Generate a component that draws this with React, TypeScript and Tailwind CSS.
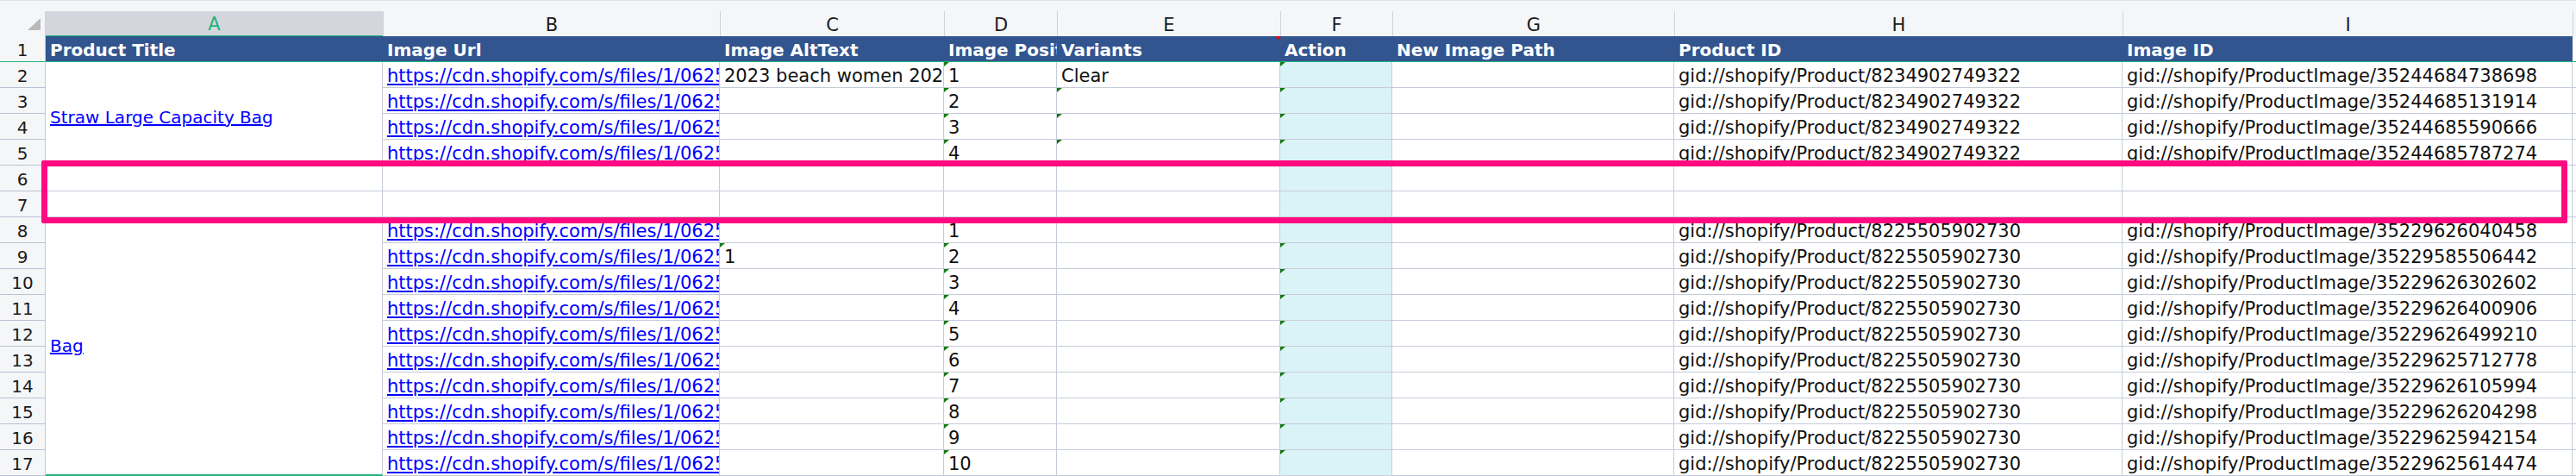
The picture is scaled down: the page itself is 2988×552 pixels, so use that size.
import React from 'react';

type Col = 'B' | 'C' | 'D' | 'E' | 'F' | 'G' | 'H' | 'I' | 'J';

interface RowData {
  n: number;
  cells: Partial<Record<Col, string>>;
  marks: Col[];
}

const URL = 'https://cdn.shopify.com/s/files/1/0625/8936/1047/files/';
const P1 = 'gid://shopify/Product/8234902749322';
const P2 = 'gid://shopify/Product/8225505902730';
const IMG = 'gid://shopify/ProductImage/';

const COLS: Col[] = ['B', 'C', 'D', 'E', 'F', 'G', 'H', 'I', 'J'];

const rows: RowData[] = [
  { n: 2, cells: { B: URL + 'beach-bag-1.jpg', C: '2023 beach women 2023 new straw bag', D: '1', E: 'Clear', H: P1, I: IMG + '35244684738698' }, marks: ['D', 'F'] },
  { n: 3, cells: { B: URL + 'beach-bag-2.jpg', D: '2', H: P1, I: IMG + '35244685131914' }, marks: ['D', 'E', 'F'] },
  { n: 4, cells: { B: URL + 'beach-bag-3.jpg', D: '3', H: P1, I: IMG + '35244685590666' }, marks: ['D', 'E', 'F'] },
  { n: 5, cells: { B: URL + 'beach-bag-4.jpg', D: '4', H: P1, I: IMG + '35244685787274' }, marks: ['D', 'E', 'F'] },
  { n: 6, cells: {}, marks: [] },
  { n: 7, cells: {}, marks: [] },
  { n: 8, cells: { B: URL + 'bag-1.jpg', D: '1', H: P2, I: IMG + '35229626040458' }, marks: ['D', 'F'] },
  { n: 9, cells: { B: URL + 'bag-2.jpg', C: '1', D: '2', H: P2, I: IMG + '35229585506442' }, marks: ['C', 'D', 'F'] },
  { n: 10, cells: { B: URL + 'bag-3.jpg', D: '3', H: P2, I: IMG + '35229626302602' }, marks: ['D', 'F'] },
  { n: 11, cells: { B: URL + 'bag-4.jpg', D: '4', H: P2, I: IMG + '35229626400906' }, marks: ['D', 'F'] },
  { n: 12, cells: { B: URL + 'bag-5.jpg', D: '5', H: P2, I: IMG + '35229626499210' }, marks: ['D', 'F'] },
  { n: 13, cells: { B: URL + 'bag-6.jpg', D: '6', H: P2, I: IMG + '35229625712778' }, marks: ['D', 'F'] },
  { n: 14, cells: { B: URL + 'bag-7.jpg', D: '7', H: P2, I: IMG + '35229626105994' }, marks: ['D', 'F'] },
  { n: 15, cells: { B: URL + 'bag-8.jpg', D: '8', H: P2, I: IMG + '35229626204298' }, marks: ['D', 'F'] },
  { n: 16, cells: { B: URL + 'bag-9.jpg', D: '9', H: P2, I: IMG + '35229625942154' }, marks: ['D', 'F'] },
  { n: 17, cells: { B: URL + 'bag-10.jpg', D: '10', H: P2, I: IMG + '35229625614474' }, marks: ['D', 'F'] },
];

const headers: Record<Col | 'A', string> = {
  A: 'Product Title',
  B: 'Image Url',
  C: 'Image AltText',
  D: 'Image Position',
  E: 'Variants',
  F: 'Action',
  G: 'New Image Path',
  H: 'Product ID',
  I: 'Image ID',
  J: '',
};

// little green "number stored as text" flag in the top-left corner
const GreenMark = () => (
  <div className="absolute left-0 top-0 w-[6px] h-[5px] bg-[#137a13] [clip-path:polygon(0_0,100%_0,0_100%)]" />
);

const RowHead = ({ label, green }: { label: string; green?: boolean }) => (
  <div
    className={`flex items-end justify-center pb-px bg-[#f5f6f8] border-r border-r-[#c5ccd9] border-b ${
      green ? 'border-b-[#1fb47a]' : 'border-b-[#b9c2d3]'
    }`}
  >
    <span className="leading-[24px] text-[#1a1a1a]">{label}</span>
  </div>
);

const App: React.FC = () => {
  return (
    <div className="relative w-[2988px] h-[552px] overflow-hidden bg-white font-['DejaVu_Sans',sans-serif] text-[20px] text-black">
      {/* top strip */}
      <div className="h-[13px] bg-[#f5f6f8] border-t border-[#dfe1e5]" />

      <div className="grid grid-cols-[53px_391px_391px_260px_131px_259px_130px_327px_520px_522px_1fr] grid-rows-[29px_repeat(17,30px)]">
        {/* column letters */}
        <div className="relative bg-[#f5f6f8] border-r border-[#cfd3da]">
          <div className="absolute left-[32px] top-[8px] w-[15px] h-[14px] bg-[#b9b9b9] [clip-path:polygon(100%_0,100%_100%,0_100%)]" />
        </div>
        <div className="flex items-end justify-center pb-px bg-[#d3d6dd] border-b border-[#1fb47a]">
          <span className="leading-[24px] text-[21px] text-[#1fb47a]">A</span>
        </div>
        {COLS.map((c) => (
          <div key={c} className="flex items-end justify-center pb-px bg-[#f5f6f8] border-l border-[#cfd3da]">
            <span className="leading-[24px] text-[21px] text-[#1a1a1a]">{c === 'J' ? '' : c}</span>
          </div>
        ))}

        {/* row 1: table header */}
        <RowHead label="1" green />
        <div className="flex items-end pl-[5px] pb-px bg-[#32558f] border-b border-[#1fb47a] overflow-hidden whitespace-nowrap">
          <span className="leading-[24px] font-bold text-white">{headers.A}</span>
        </div>
        {COLS.map((c) => (
          <div
            key={c}
            className={`relative flex items-end pl-[5px] pb-px border-b border-[#1fb47a] overflow-hidden whitespace-nowrap ${
              c === 'J' ? 'bg-white' : 'bg-[#32558f]'
            }`}
          >
            <span className="leading-[24px] font-bold text-white">{headers[c]}</span>
            {c === 'E' && (
              <div className="absolute right-0 top-0 w-[6px] h-[5px] bg-[#ff0000] [clip-path:polygon(0_0,100%_0,100%_100%)]" />
            )}
          </div>
        ))}

        {/* body rows */}
        {rows.map((r) => (
          <React.Fragment key={r.n}>
            <RowHead label={String(r.n)} />
            {r.n === 2 && (
              <div className="row-span-4 flex items-center pl-[5px] pt-[8px] border-r border-b border-[#c5ccd9] overflow-hidden whitespace-nowrap">
                <span className="leading-[24px] text-[#0000ff] underline">Straw Large Capacity Bag</span>
              </div>
            )}
            {r.n === 8 && (
              <div className="row-span-10 flex items-center pl-[5px] border-r border-[#c5ccd9] border-b-2 border-b-[#1fb47a] overflow-hidden whitespace-nowrap">
                <span className="leading-[24px] text-[#0000ff] underline">Bag</span>
              </div>
            )}
            {(r.n === 6 || r.n === 7) && <div className="border-r border-b border-[#c5ccd9]" />}
            {COLS.map((c) => {
              const v = r.cells[c];
              return (
                <div
                  key={c}
                  className={`relative flex items-end pl-[5px] pb-px border-r border-b border-[#c5ccd9] overflow-hidden whitespace-nowrap ${
                    c === 'F' ? 'bg-[#daf3f7]' : 'bg-white'
                  }`}
                >
                  {v && (
                    <span
                      className={`leading-[24px] text-[21px] ${c === 'B' ? 'text-[#0000ff] underline' : 'text-[#111]'}`}
                    >
                      {v}
                    </span>
                  )}
                  {r.marks.includes(c) && <GreenMark />}
                </div>
              );
            })}
          </React.Fragment>
        ))}
      </div>

      {/* highlight box drawn over rows 6-7 */}
      <div className="absolute left-[48px] top-[186px] w-[2930px] h-[73px] border-[7px] border-[#ff0a80] rounded-[2px] pointer-events-none" />
    </div>
  );
};

export default App;
